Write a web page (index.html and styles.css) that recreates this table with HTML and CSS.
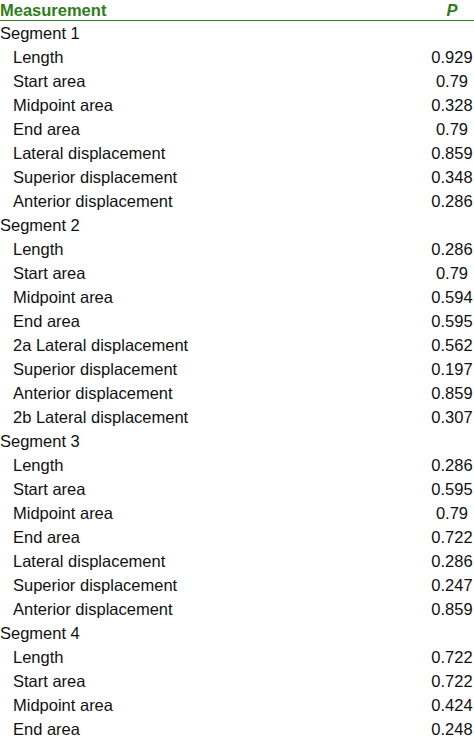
FILE: index.html
```html
<!DOCTYPE html>
<html>
<head>
<meta charset="utf-8">
<link rel="stylesheet" href="styles.css">
</head>
<body>
<div class="table">
  <div class="head">
    <span class="h-label">Measurement</span>
    <span class="h-val">P</span>
  </div>
  <div class="row seg"><span>Segment 1</span><span class="val"></span></div>
  <div class="row"><span class="lbl">Length</span><span class="val">0.929</span></div>
  <div class="row"><span class="lbl">Start area</span><span class="val">0.79</span></div>
  <div class="row"><span class="lbl">Midpoint area</span><span class="val">0.328</span></div>
  <div class="row"><span class="lbl">End area</span><span class="val">0.79</span></div>
  <div class="row"><span class="lbl">Lateral displacement</span><span class="val">0.859</span></div>
  <div class="row"><span class="lbl">Superior displacement</span><span class="val">0.348</span></div>
  <div class="row"><span class="lbl">Anterior displacement</span><span class="val">0.286</span></div>
  <div class="row seg"><span>Segment 2</span><span class="val"></span></div>
  <div class="row"><span class="lbl">Length</span><span class="val">0.286</span></div>
  <div class="row"><span class="lbl">Start area</span><span class="val">0.79</span></div>
  <div class="row"><span class="lbl">Midpoint area</span><span class="val">0.594</span></div>
  <div class="row"><span class="lbl">End area</span><span class="val">0.595</span></div>
  <div class="row"><span class="lbl">2a Lateral displacement</span><span class="val">0.562</span></div>
  <div class="row"><span class="lbl">Superior displacement</span><span class="val">0.197</span></div>
  <div class="row"><span class="lbl">Anterior displacement</span><span class="val">0.859</span></div>
  <div class="row"><span class="lbl">2b Lateral displacement</span><span class="val">0.307</span></div>
  <div class="row seg"><span>Segment 3</span><span class="val"></span></div>
  <div class="row"><span class="lbl">Length</span><span class="val">0.286</span></div>
  <div class="row"><span class="lbl">Start area</span><span class="val">0.595</span></div>
  <div class="row"><span class="lbl">Midpoint area</span><span class="val">0.79</span></div>
  <div class="row"><span class="lbl">End area</span><span class="val">0.722</span></div>
  <div class="row"><span class="lbl">Lateral displacement</span><span class="val">0.286</span></div>
  <div class="row"><span class="lbl">Superior displacement</span><span class="val">0.247</span></div>
  <div class="row"><span class="lbl">Anterior displacement</span><span class="val">0.859</span></div>
  <div class="row seg"><span>Segment 4</span><span class="val"></span></div>
  <div class="row"><span class="lbl">Length</span><span class="val">0.722</span></div>
  <div class="row"><span class="lbl">Start area</span><span class="val">0.722</span></div>
  <div class="row"><span class="lbl">Midpoint area</span><span class="val">0.424</span></div>
  <div class="row"><span class="lbl">End area</span><span class="val">0.248</span></div>
</div>
</body>
</html>
```
FILE: styles.css
```css
html, body {
  margin: 0;
  padding: 0;
  background: #ffffff;
}
body {
  font-family: "Liberation Sans", Arial, sans-serif;
  font-size: 16.5px;
  color: #111111;
  overflow: hidden;
}
.table {
  width: 474px;
}
.head {
  display: grid;
  grid-template-columns: 1fr 44px;
  height: 20px;
  line-height: 20px;
  border-bottom: 1.5px solid #2f7d22;
  color: #2f7d22;
  font-weight: bold;
}
.h-val {
  font-style: italic;
  text-align: center;
}
.row {
  display: grid;
  grid-template-columns: 1fr 44px;
  height: 24px;
  line-height: 24px;
  white-space: nowrap;
}
.lbl {
  padding-left: 13px;
}
.val {
  text-align: center;
}
```
